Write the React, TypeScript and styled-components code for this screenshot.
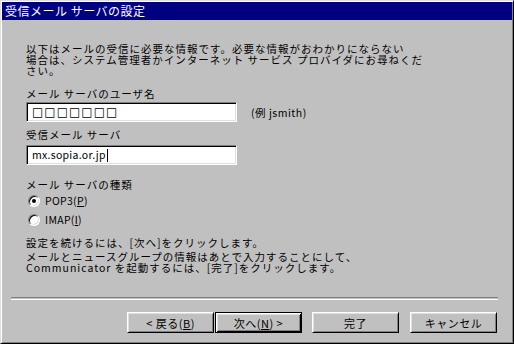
import React from "react";
import styled, { createGlobalStyle } from "styled-components";

const GlobalStyle = createGlobalStyle`
  html, body {
    margin: 0;
    padding: 0;
    background: #c0c0c0;
  }
  body {
    font-family: "Noto Sans CJK JP", "DejaVu Sans", sans-serif;
    font-size: 10.5px;
    color: #000;
  }
`;

const Window = styled.div`
  box-sizing: border-box;
  width: 514px;
  height: 344px;
  padding: 1px;
  background: #c0c0c0;
  border: 1px solid;
  border-color: #dfdfdf #000 #000 #dfdfdf;
  box-shadow: inset 1px 1px #fff, inset -1px -1px #808080;
  display: flex;
  flex-direction: column;
`;

const TitleBar = styled.div`
  height: 18px;
  background: #000080;
  color: #fff;
  font-size: 12px;
  letter-spacing: 0.5px;
  line-height: 18px;
  padding-left: 3px;
  white-space: nowrap;
`;

const Body = styled.div`
  display: flex;
  flex-direction: column;
  padding: 23px 0 0 24px;
  letter-spacing: 1px;
`;

const Line = styled.div<{ $gap?: number }>`
  height: 11px;
  line-height: 11px;
  white-space: nowrap;
  margin-top: ${(p) => p.$gap ?? 0}px;
`;

const FieldRow = styled.div<{ $gap?: number }>`
  display: flex;
  align-items: center;
  margin-top: ${(p) => p.$gap ?? 0}px;
`;

const Field = styled.div`
  box-sizing: border-box;
  width: 211px;
  height: 20px;
  background: #fff;
  border: 1px solid;
  border-color: #808080 #fff #fff #808080;
  box-shadow: inset 1px 1px #000, inset -1px -1px #dfdfdf;
  padding: 0 0 0 5px;
  line-height: 18px;
  white-space: nowrap;
  display: flex;
  align-items: center;
  letter-spacing: 0.3px;
`;

const Squares = styled.span`
  font-family: "DejaVu Sans", sans-serif;
  font-size: 12px;
  letter-spacing: 1px;
`;

const Caret = styled.span`
  display: inline-block;
  width: 1px;
  height: 13px;
  background: #000;
  margin-left: 1px;
`;

const Hint = styled.span`
  margin-left: 14px;
  letter-spacing: 0.5px;
`;

const RadioRow = styled.div<{ $gap: number }>`
  display: flex;
  align-items: center;
  height: 12px;
  margin-top: ${(p) => p.$gap}px;
  padding-left: 2px;
`;

const RadioDot = styled.span<{ $checked?: boolean }>`
  box-sizing: border-box;
  width: 12px;
  height: 12px;
  border-radius: 50%;
  background: #fff;
  border: 1px solid;
  border-color: #808080 #fff #fff #808080;
  box-shadow: inset 1px 1px #000, inset -1px -1px #dfdfdf;
  display: flex;
  align-items: center;
  justify-content: center;
  &::after {
    content: "";
    width: 4px;
    height: 4px;
    border-radius: 50%;
    background: ${(p) => (p.$checked ? "#000" : "transparent")};
  }
`;

const RadioLabel = styled.span`
  margin-left: 5px;
  line-height: 12px;
  letter-spacing: 0.3px;
`;

const Separator = styled.div`
  margin: 24px 14px 0 9px;
  height: 1px;
  border-top: 1px solid #808080;
  border-bottom: 1px solid #fff;
`;

const ButtonRow = styled.div`
  display: flex;
  margin: 12px 0 0 125px;
`;

const Button = styled.div<{ $default?: boolean; $gap?: number }>`
  box-sizing: border-box;
  width: 87px;
  height: 21px;
  margin-left: ${(p) => p.$gap ?? 0}px;
  display: flex;
  align-items: center;
  justify-content: center;
  font-size: 11px;
  letter-spacing: 0.5px;
  border: 1px solid;
  border-color: ${(p) =>
    p.$default ? "#000" : "#fff #000 #000 #fff"};
  box-shadow: ${(p) =>
    p.$default
      ? "inset 1px 1px #fff, inset -1px -1px #000, inset 2px 2px #dfdfdf, inset -2px -2px #808080"
      : "inset 1px 1px #dfdfdf, inset -1px -1px #808080"};
`;

export default function App() {
  return (
    <>
      <GlobalStyle />
      <Window>
        <TitleBar>受信メール サーバの設定</TitleBar>
        <Body>
          <Line>以下はメールの受信に必要な情報です。必要な情報がおわかりにならない</Line>
          <Line>場合は、システム管理者かインターネット サービス プロバイダにお尋ねくだ</Line>
          <Line>さい。</Line>

          <Line $gap={12}>メール サーバのユーザ名</Line>
          <FieldRow $gap={3}>
            <Field>
              <Squares>□□□□□□□</Squares>
            </Field>
            <Hint>(例 jsmith)</Hint>
          </FieldRow>

          <Line $gap={7}>受信メール サーバ</Line>
          <FieldRow $gap={5}>
            <Field>
              mx.sopia.or.jp
              <Caret />
            </Field>
          </FieldRow>

          <Line $gap={14}>メール サーバの種類</Line>
          <RadioRow $gap={5}>
            <RadioDot $checked />
            <RadioLabel>
              POP3(<u>P</u>)
            </RadioLabel>
          </RadioRow>
          <RadioRow $gap={7}>
            <RadioDot />
            <RadioLabel>
              IMAP(<u>I</u>)
            </RadioLabel>
          </RadioRow>

          <Line $gap={11}>設定を続けるには、[次へ]をクリックします。</Line>
          <Line $gap={3}>メールとニュースグループの情報はあとで入力することにして、</Line>
          <Line>Communicator を起動するには、[完了]をクリックします。</Line>
        </Body>
        <Separator />
        <ButtonRow>
          <Button>
            &lt; 戻る(<u>B</u>)
          </Button>
          <Button $default $gap={1}>
            次へ(<u>N</u>) &gt;
          </Button>
          <Button $gap={10}>完了</Button>
          <Button $gap={11}>キャンセル</Button>
        </ButtonRow>
      </Window>
    </>
  );
}
